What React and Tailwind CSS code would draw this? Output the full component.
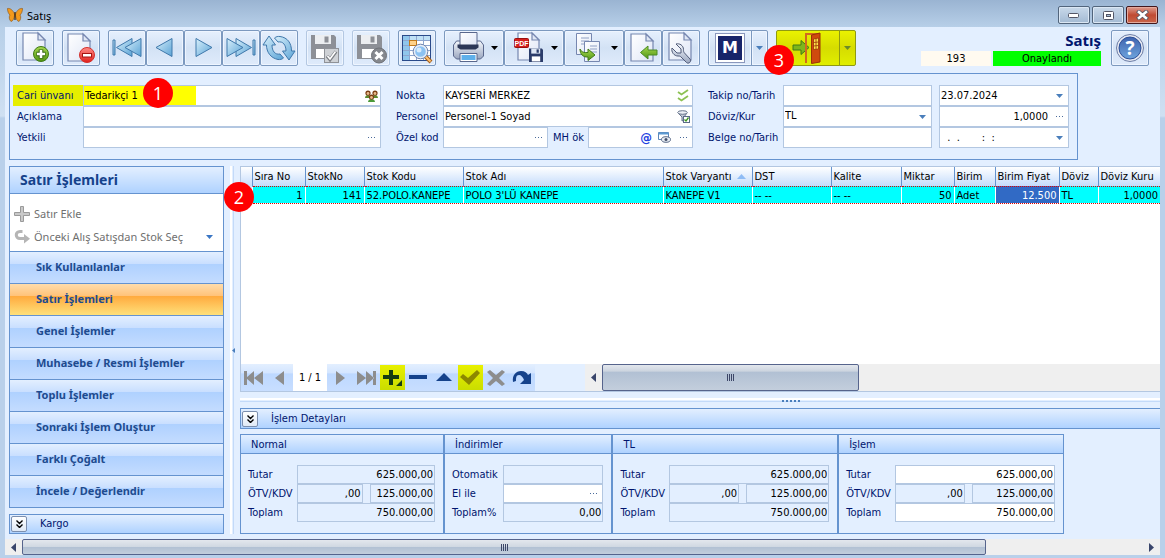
import React, { useState } from 'react';
import clsx from 'clsx';

const NAV_GROUPS = [
  'Sık Kullanılanlar',
  'Satır İşlemleri',
  'Genel İşlemler',
  'Muhasebe / Resmi İşlemler',
  'Toplu İşlemler',
  'Sonraki İşlem Oluştur',
  'Farklı Çoğalt',
  'İncele / Değerlendir',
];

const COLUMNS = [
  { title: 'Sıra No', value: '1', width: 'w-[53px]', right: true },
  { title: 'StokNo', value: '141', width: 'w-[59px]', right: true },
  { title: 'Stok Kodu', value: '52.POLO.KANEPE', width: 'w-[99px]' },
  { title: 'Stok Adı', value: "POLO 3'LÜ KANEPE", width: 'w-[200px]' },
  { title: 'Stok Varyantı', value: 'KANEPE V1', width: 'w-[89px]', sorted: true },
  { title: 'DST', value: '-- --', width: 'w-[79px]' },
  { title: 'Kalite', value: '-- --', width: 'w-[70px]' },
  { title: 'Miktar', value: '50', width: 'w-[53px]', right: true },
  { title: 'Birim', value: 'Adet', width: 'w-[41px]' },
  { title: 'Birim Fiyat', value: '12.500', width: 'w-[64px]', right: true, selected: true },
  { title: 'Döviz', value: 'TL', width: 'w-[39px]' },
  { title: 'Döviz Kuru', value: '1,0000', width: 'w-auto', right: true },
];

/* ---------- small pieces ---------- */

const Caret = ({ className = 'fill-[#4a7ebb]' }) => (
  <svg width="7" height="4" viewBox="0 0 7 4" className={clsx('shrink-0', className)} aria-hidden="true">
    <path d="M0 0h7L3.500 4z" />
  </svg>
);

const StepBadge = ({ children, className }) => (
  <span
    className={clsx(
      "absolute z-10 flex h-[30px] w-[30px] items-center justify-center rounded-full bg-[#ff0000] font-['Open_Sans',sans-serif] text-lg text-white",
      className
    )}
  >
    {children}
  </span>
);

const toolButton =
  'flex h-9 items-center justify-center rounded-[2px] border border-[#7c99bf] bg-linear-to-b from-[#e6f0fd] via-[#d3e2f5] to-[#dfebfb] shadow-[inset_0_0_0_1px_#eef5ff]';

const ToolButton = ({ label, wide, disabled, caret, children }) => (
  <button
    type="button"
    aria-label={label}
    disabled={disabled}
    className={clsx(toolButton, wide ? 'w-[60px]' : 'w-[38px]', disabled && 'border-[#b4c8e2]')}
  >
    {children}
    {caret && <Caret className="mr-1 fill-black" />}
  </button>
);

const Page = ({ x = 6, y = 2, w = 22, h = 27 }) => (
  <g stroke="#7687b0" strokeWidth="1.200">
    <path d={`M${x} ${y}h${w - 7}l7 7v${h - 7}h${-w}z`} fill="url(#paper)" />
    <path d={`M${x + w - 7} ${y}v7h7z`} fill="#dfe7f5" />
  </g>
);

const Icon = ({ w = 36, children }) => (
  <svg width={w} height="34" viewBox={`0 0 ${w} 34`} fill="none" className="shrink-0" aria-hidden="true">
    {children}
  </svg>
);

const Floppy = ({ x, y, s = 1, body = '#8d9097', label = '#eceef1' }) => (
  <g transform={`translate(${x} ${y}) scale(${s})`}>
    <path d="M0 1h23l2 2v22H0z" fill={body} />
    <path d="M4 1h16v9H4z" fill={label} />
    <path d="M13.500 2.500h4v6h-4z" fill={body} />
    <path d="M5 15h15v9H5z" fill="#fff" />
  </g>
);

const SvgDefs = () => (
  <svg width="0" height="0" className="absolute" aria-hidden="true">
    <defs>
      <linearGradient id="paper" x1="0" y1="0" x2="1" y2="1">
        <stop offset="0" stopColor="#ffffff" />
        <stop offset="1" stopColor="#dfe6f6" />
      </linearGradient>
      <linearGradient id="blue" x1="0" y1="0" x2="1" y2="1">
        <stop offset="0" stopColor="#d9f0fb" />
        <stop offset="1" stopColor="#5aa3d6" />
      </linearGradient>
      <linearGradient id="green" x1="0" y1="0" x2="0" y2="1">
        <stop offset="0" stopColor="#a7d94f" />
        <stop offset="1" stopColor="#4f9412" />
      </linearGradient>
      <linearGradient id="red" x1="0" y1="0" x2="0" y2="1">
        <stop offset="0" stopColor="#ff8b86" />
        <stop offset="1" stopColor="#e0201c" />
      </linearGradient>
      <linearGradient id="metal" x1="0" y1="0" x2="0" y2="1">
        <stop offset="0" stopColor="#f4f7fc" />
        <stop offset="1" stopColor="#9aa6bf" />
      </linearGradient>
      <linearGradient id="help" x1="0" y1="0" x2="0" y2="1">
        <stop offset="0" stopColor="#3d62ad" />
        <stop offset="1" stopColor="#6fa5dd" />
      </linearGradient>
    </defs>
  </svg>
);

/* ---------- title bar ---------- */

const TitleBar = () => (
  <header className="flex h-[27px] items-start pr-[7px] pl-[7px]">
    <svg width="16" height="16" viewBox="0 0 16 16" className="mt-[7px]" aria-hidden="true">
      <path d="M7.500 7C6 3 3 1 .5 1.500c0 3 1 5 2.500 6.500C1.500 10 2.500 13 4 14.500c2-.5 3.200-3 3.500-6z" fill="#f39a1d" stroke="#8a4d08" strokeWidth=".6" />
      <path d="M8.500 7C10 3 13 1 15.500 1.500c0 3-1 5-2.500 6.500 1.500 2 .5 5-1 6.500-2-.5-3.200-3-3.500-6z" fill="#f39a1d" stroke="#8a4d08" strokeWidth=".6" />
      <path d="M8 5v8" stroke="#3a2105" strokeWidth="1.200" />
    </svg>
    <h1 className="mt-2 ml-1 font-['Noto_Sans',sans-serif] text-[11px] leading-4 text-black">Satış</h1>
    <div className="mt-[6px] ml-auto flex gap-0.5">
      <button type="button" aria-label="Simge durumuna küçült" className="flex h-[18px] w-8 items-center justify-center rounded-[2px] border border-[#52657c] bg-linear-to-b from-[#c9d9ea] to-[#a3bad3] shadow-[inset_0_0_0_1px_#dbe7f4]">
        <svg width="12" height="5" viewBox="0 0 12 5"><rect x=".5" y=".5" width="10" height="4" rx="1" fill="#fff" stroke="#535666" /></svg>
      </button>
      <button type="button" aria-label="Önceki boyut" className="flex h-[18px] w-8 items-center justify-center rounded-[2px] border border-[#52657c] bg-linear-to-b from-[#c9d9ea] to-[#a3bad3] shadow-[inset_0_0_0_1px_#dbe7f4]">
        <svg width="11" height="9" viewBox="0 0 11 9"><rect x=".5" y=".5" width="10" height="8" rx="1" fill="#fff" stroke="#535666" /><rect x="3.500" y="3.500" width="4" height="2" fill="#a9bfd8" stroke="#535666" /></svg>
      </button>
      <button type="button" aria-label="Kapat" className="flex h-[18px] w-8 items-center justify-center rounded-[2px] border border-[#43171c] bg-linear-to-b from-[#dd9c8f] via-[#c04a33] to-[#c9654a] shadow-[inset_0_0_0_1px_#e5aa9c]">
        <svg width="13" height="10" viewBox="0 0 13 10"><path d="M3 2l7 6M10 2L3 8" stroke="#535666" strokeWidth="4.200" strokeLinecap="square" /><path d="M3 2l7 6M10 2L3 8" stroke="#fff" strokeWidth="2.600" strokeLinecap="square" /></svg>
      </button>
    </div>
  </header>
);

/* ---------- toolbar ---------- */

const triangle = { fill: 'url(#blue)', stroke: '#3f78ab', strokeWidth: 1, strokeLinejoin: 'round' };

const Toolbar = () => (
  <div className="flex items-start pt-[3px] pr-[11px] pb-[7px] pl-[11px]">
    <div className="flex gap-2">
      <ToolButton label="Yeni">
        <Icon>
          <Page />
          <circle cx="24" cy="23" r="7.500" fill="url(#green)" stroke="#3f7a16" />
          <path d="M24 18.500v9M19.500 23h9" stroke="#2f6110" strokeWidth="4.600" />
          <path d="M24 19v8M20 23h8" stroke="#fff" strokeWidth="2.600" />
        </Icon>
      </ToolButton>
      <ToolButton label="Sil">
        <Icon>
          <Page x={5} y={3} />
          <circle cx="24" cy="24" r="7.500" fill="url(#red)" stroke="#d3302c" />
          <rect x="19.500" y="22.500" width="9" height="3.500" fill="#fff" stroke="#a61512" />
        </Icon>
      </ToolButton>
      <div className="flex">
        <ToolButton label="İlk kayıt">
          <Icon>
            <g {...triangle}>
              <path d="M4 9h2v15H4z" />
              <path d="M7.500 16.500L23 7.500v18z" />
              <path d="M16 16.500l16-9v18z" />
            </g>
          </Icon>
        </ToolButton>
        <ToolButton label="Önceki kayıt">
          <Icon><path d="M9 16.500l16-9v18z" {...triangle} /></Icon>
        </ToolButton>
        <ToolButton label="Sonraki kayıt">
          <Icon><path d="M27 16.500l-16-9v18z" {...triangle} /></Icon>
        </ToolButton>
        <ToolButton label="Son kayıt">
          <Icon>
            <g {...triangle}>
              <path d="M30 9h2v15h-2z" />
              <path d="M28.500 16.500L13 7.500v18z" />
              <path d="M20 16.500l-16-9v18z" />
            </g>
          </Icon>
        </ToolButton>
        <ToolButton label="Yenile">
          <Icon>
            <g fill="url(#blue)" stroke="#3f78ab" strokeLinejoin="round">
              <path d="M8 5L2 14h3.500c0 7 4 13 11.500 14.500 2 .3 4-.2 5.500-1.500l-3.500-4c-5 1-8-3-8-9h3.500z" />
              <path d="M28 29l6-9h-3.500C30.500 12 26.500 6.500 19 5.500c-2-.3-4 .2-5.500 1.500l3.500 4c5-1 8 3 8 9h-3.500z" />
            </g>
          </Icon>
        </ToolButton>
      </div>
      <ToolButton label="Kaydet" disabled>
        <Icon>
          <Floppy x={4} y={3} />
          <rect x="17.500" y="17.500" width="14" height="14" fill="#cfd2d6" stroke="#8f9298" />
          <path d="M20 25l3 3.500 6-8" stroke="#7b7e84" strokeWidth="3.400" />
          <path d="M20.500 25l2.500 3 5.500-7.500" stroke="#fff" strokeWidth="1.600" />
        </Icon>
      </ToolButton>
      <ToolButton label="Vazgeç" disabled>
        <Icon>
          <Floppy x={4} y={3} />
          <circle cx="26" cy="24.500" r="7.500" fill="#85888e" stroke="#6e7177" />
          <path d="M22.500 21l7 7M29.500 21l-7 7" stroke="#fff" strokeWidth="3" />
        </Icon>
      </ToolButton>
      <ToolButton label="Listede ara">
        <Icon>
          <rect x="3.500" y="4.500" width="28" height="25" fill="#fff" stroke="#2a4a8a" />
          <path d="M4 5h6v24H4z" fill="#8fc6ec" />
          <path d="M10 5h21v4H10z" fill="#bfe0f5" />
          <path d="M10.500 5v24M17.500 5v24M24.500 5v24M4 9.500h27M4 14.500h27M4 19.500h27M4 24.500h27" stroke="#8ea6cf" />
          <rect x="10.500" y="9.500" width="7" height="5" fill="#ffd28a" stroke="#c07a1c" />
          <path d="M26 25l6 6" stroke="#a5601c" strokeWidth="4" />
          <path d="M26.500 25.500l5 5" stroke="#ffc070" strokeWidth="2" />
          <circle cx="21.500" cy="20.500" r="6.300" fill="#8cc2f2" stroke="#e8eef8" strokeWidth="2" />
          <circle cx="21.500" cy="20.500" r="7.300" stroke="#7186ae" />
          <circle cx="20" cy="19" r="2.500" fill="#d8ecfc" />
        </Icon>
      </ToolButton>
      <div className="flex">
        <ToolButton label="Yazdır" wide caret>
          <Icon w={44}>
            <path d="M6.500 14l3-4h24l3 4v11l-3 3h-24l-3-3z" fill="url(#metal)" stroke="#59678c" />
            <path d="M13 1.500h17v14H13z" fill="url(#paper)" stroke="#59678c" />
            <path d="M10.500 13.500h21v3l-3 2h-15l-3-2z" fill="#2c3757" />
            <path d="M13 22.500h17v8H13z" fill="#fff" stroke="#59678c" />
            <path d="M14.500 24h14v5h-14z" fill="#5fb0ea" />
          </Icon>
        </ToolButton>
        <ToolButton label="PDF kaydet" wide caret>
          <Icon w={44}>
            <Page x={11} y={2} w={21} />
            <rect x="7.500" y="7.500" width="14" height="9" rx="1" fill="#d5201d" stroke="#9a100e" />
            <text x="14.500" y="14.500" textAnchor="middle" fontSize="7" fontWeight="700" fill="#fff" fontFamily="Liberation Sans">PDF</text>
            <Floppy x={22} y={17} s={0.56} body="#2b3c6a" label="#dfe8f5" />
          </Icon>
        </ToolButton>
        <ToolButton label="Aktar" wide caret>
          <Icon w={44}>
            <path d="M9.500 2.500h15v21h-15z" fill="url(#paper)" stroke="#7687b0" />
            <path d="M14 7h8M14 10h8M14 13h8" stroke="#8fa0c4" />
            <path d="M17.500 10.500h15v20h-15z" fill="url(#paper)" stroke="#7687b0" />
            <path d="M23 15h7M23 18h7M23 21h7" stroke="#8fa0c4" />
            <path d="M13 18c1 3 4 4 8 3.500V18l7 6-7 5.500V26c-5 .5-8-3-8-8z" fill="url(#green)" stroke="#3f7a16" />
          </Icon>
        </ToolButton>
        <ToolButton label="İçeri al">
          <Icon>
            <Page y={3} />
            <path d="M15.500 21.500l7.500-6.500v4h9v5h-9v4z" fill="url(#green)" stroke="#4a8a26" />
          </Icon>
        </ToolButton>
        <ToolButton label="Araçlar">
          <Icon>
            <Page y={2} />
            <path d="M13 13l5 5v4h-4l-5-5c-1 4 2 8 6 8 1.500 0 2 0 3 1l5.500 5.500c2 2 5.500-1 3.500-3.500L21.500 22c-1-1-1-2-1-3.500 0-4-4-6.500-7.500-5.500z" fill="url(#metal)" stroke="#4f5a78" />
          </Icon>
        </ToolButton>
      </div>
      <div className="flex">
        <button type="button" aria-label="Mikro" className={clsx(toolButton, 'w-11 rounded-r-none')}>
          <span className="flex h-[30px] w-[30px] items-center justify-center border border-[#8a97bd] bg-white">
            <span className="flex h-6 w-6 items-center justify-center bg-[#17246a] font-['DejaVu_Sans',sans-serif] text-base leading-none font-bold text-white">M</span>
          </span>
        </button>
        <button type="button" aria-label="Mikro seçenekleri" className={clsx(toolButton, '-ml-px w-[17px] rounded-l-none')}>
          <Caret />
        </button>
      </div>
      <div className="relative flex">
        <button type="button" aria-label="Çıkış" className="flex h-9 w-16 items-center justify-center rounded-l-[2px] border border-[#8f9a12] bg-linear-to-b from-[#eaf200] via-[#d6dc00] to-[#e0ee00]">
          <Icon w={60}>
            <path d="M15 14h8V9.500l8 7-8 7V19h-8z" fill="#7db61c" stroke="#3f7a16" />
            <path d="M28 32V3h13" stroke="#d2691e" strokeWidth="2" />
            <path d="M33.500 4L42 2v29l-8.500 1.500z" fill="#cf4a0e" stroke="#9a3206" />
            <path d="M35.500 8l5-1v11l-5 .5z" fill="#ffe24a" stroke="#9a3206" strokeWidth=".8" />
            <path d="M38 7.500v11M35.500 11.500l5-.5M35.500 15l5-.5" stroke="#9a3206" strokeWidth=".8" />
          </Icon>
        </button>
        <button type="button" aria-label="Çıkış seçenekleri" className="-ml-px flex h-9 w-[17px] items-center justify-center rounded-r-[2px] border border-[#8f9a12] bg-linear-to-b from-[#eaf200] via-[#d6dc00] to-[#e0ee00]">
          <Caret className="fill-[#6c8a2a]" />
        </button>
        <StepBadge className="top-[15px] -left-3">3</StepBadge>
      </div>
    </div>

    <div className="ml-auto flex flex-col items-end">
      <strong className="h-[21px] font-['Noto_Sans',sans-serif] text-[15px] leading-5 text-[#00156e]">Satış</strong>
      <div className="flex gap-0.5 text-center text-[11px] leading-4 text-black">
        <span className="h-[15px] w-[70px] bg-[#fffaf0]">193</span>
        <span className="h-[15px] w-[108px] bg-[#00ff00]">Onaylandı</span>
      </div>
    </div>
    <div className="ml-2.5">
      <ToolButton label="Yardım">
        <Icon>
          <circle cx="18" cy="17" r="13.500" fill="#e6e9f2" stroke="#6d7ea6" />
          <circle cx="18" cy="17" r="11" fill="url(#help)" stroke="#2d4f97" />
          <text x="18" y="24" textAnchor="middle" fontSize="19" fontWeight="700" fill="#fff" fontFamily="Open Sans">?</text>
        </Icon>
      </ToolButton>
    </div>
  </div>
);

/* ---------- document form ---------- */

const Dots = () => (
  <button type="button" aria-label="Seç" className="mr-[3px] flex h-4 w-3 shrink-0 items-center justify-center gap-0.5">
    <i className="h-px w-px bg-[#4a6a9a]" />
    <i className="h-px w-px bg-[#4a6a9a]" />
    <i className="h-px w-px bg-[#4a6a9a]" />
  </button>
);

const Drop = () => (
  <button type="button" aria-label="Listeyi aç" className="mr-[5px] flex h-4 items-center">
    <Caret />
  </button>
);

const TextBox = ({ id, label, value = '', right, highlight, className, children }) => {
  const [text, setText] = useState(value);
  return (
    <div className={clsx('relative flex h-[21px] min-w-0 items-center border border-[#b3c7e1] bg-white', className)}>
      <input
        id={id}
        aria-label={label}
        type="text"
        value={text}
        onChange={(e) => setText(e.target.value)}
        className={clsx(
          'h-full w-full min-w-0 px-px text-black outline-none',
          right && 'text-right',
          highlight && 'bg-linear-to-r from-[#ffff00] from-[112px] to-transparent to-[112px]'
        )}
      />
      {children}
    </div>
  );
};

const FieldLabel = ({ htmlFor, className, children }) => (
  <label htmlFor={htmlFor} className={clsx('h-[21px] leading-[22px] whitespace-nowrap text-[#00156e]', className)}>
    {children}
  </label>
);

const DocumentForm = () => (
  <form className="mr-[82px] ml-1 flex border border-[#6593cf] pt-[11px] pr-2 pb-[11px] pl-[3px]">
    <div className="grid flex-[368] grid-cols-[70px_1fr]">
      <FieldLabel htmlFor="cari" className="bg-[#e6ee00] pl-1 text-[#2b3a00]">Cari ünvanı</FieldLabel>
      <TextBox id="cari" value="Tedarikçi 1" highlight>
        <svg width="13" height="12" viewBox="0 0 13 12" className="mr-0.5 shrink-0" aria-hidden="true">
          <path d="M0 8c0-4 6-4 6 0zM7 8c0-4 6-4 6 0z" fill="#5c8a2e" />
          <circle cx="3" cy="3" r="2.600" fill="#7a3d12" />
          <circle cx="10" cy="3" r="2.600" fill="#7a3d12" />
          <circle cx="3" cy="3.500" r="1.400" fill="#e9b98a" />
          <circle cx="10" cy="3.500" r="1.400" fill="#e9b98a" />
          <path d="M3 12c0-4 7-4 7 0z" fill="#4c9a3a" />
          <circle cx="6.500" cy="7" r="2.600" fill="#7a3d12" />
          <circle cx="6.500" cy="7.500" r="1.400" fill="#e9b98a" />
        </svg>
        <StepBadge className="-top-2 left-[59px]">1</StepBadge>
      </TextBox>
      <FieldLabel htmlFor="aciklama" className="pl-1">Açıklama</FieldLabel>
      <TextBox id="aciklama" />
      <FieldLabel htmlFor="yetkili" className="pl-1">Yetkili</FieldLabel>
      <TextBox id="yetkili"><Dots /></TextBox>
    </div>

    <div className="ml-[15px] grid flex-[297] grid-cols-[47px_1fr]">
      <FieldLabel htmlFor="nokta">Nokta</FieldLabel>
      <TextBox id="nokta" value="KAYSERİ MERKEZ">
        <svg width="12" height="13" viewBox="0 0 12 13" fill="none" className="mr-[3px] shrink-0" aria-hidden="true">
          <path d="M1 3l3.500 2.500L11 1M1 9l3.500 2.500L11 7" stroke="#8cc152" strokeWidth="1.800" />
        </svg>
      </TextBox>
      <FieldLabel htmlFor="personel">Personel</FieldLabel>
      <TextBox id="personel" value="Personel-1 Soyad">
        <svg width="13" height="13" viewBox="0 0 13 13" fill="none" className="mr-0.5 shrink-0" aria-hidden="true">
          <path d="M1 3l4 4v4l2-1V7l3-4" fill="#c3cad6" stroke="#66738c" />
          <ellipse cx="5.500" cy="2.500" rx="4.800" ry="1.800" fill="#eef1f6" stroke="#66738c" />
          <rect x="6.500" y="6.500" width="6" height="6" fill="#fff" stroke="#5b6b88" />
          <path d="M7.500 9.500l1.500 1.500 2.500-3.500" stroke="#3f9a20" strokeWidth="1.300" />
        </svg>
      </TextBox>
      <FieldLabel htmlFor="ozel">Özel kod</FieldLabel>
      <div className="flex">
        <TextBox id="ozel" className="flex-1"><Dots /></TextBox>
        <FieldLabel htmlFor="mh" className="w-10 pl-[5px]">MH ök</FieldLabel>
        <TextBox id="mh" className="flex-1">
          <button type="button" aria-label="E-posta" className="mr-1.5 text-[13px] leading-none font-bold text-[#1d3fe0]">@</button>
          <svg width="13" height="11" viewBox="0 0 13 11" fill="none" className="mr-1.5 shrink-0" aria-hidden="true">
            <path d="M.5.5h10v7H.5z" fill="#fff" stroke="#5c86b8" />
            <path d="M.5.5h10v2H.5z" fill="#5c9ad2" />
            <ellipse cx="8" cy="7.500" rx="4.500" ry="2.800" fill="#e8edf4" stroke="#5b6b88" />
            <circle cx="8" cy="7.500" r="1.500" fill="#43506a" />
          </svg>
          <Dots />
        </TextBox>
      </div>
    </div>

    <div className="ml-[15px] grid flex-[361] grid-cols-[68px_149fr_130fr] gap-x-[7px]">
      <div className="flex flex-col">
        <FieldLabel htmlFor="takip">Takip no/Tarih</FieldLabel>
        <FieldLabel htmlFor="doviz">Döviz/Kur</FieldLabel>
        <FieldLabel htmlFor="belge">Belge no/Tarih</FieldLabel>
      </div>
      <div className="flex flex-col">
        <TextBox id="takip" />
        <div className="relative flex h-[21px] items-center border border-[#b3c7e1] bg-white">
          <select id="doviz" className="h-full w-full appearance-none px-px text-black outline-none" defaultValue="TL">
            <option>TL</option>
            <option>USD</option>
            <option>EUR</option>
          </select>
          <span className="pointer-events-none absolute right-[5px]"><Caret /></span>
        </div>
        <TextBox id="belge" />
      </div>
      <div className="flex flex-col">
        <TextBox label="Takip tarihi" value="23.07.2024"><Drop /></TextBox>
        <TextBox label="Kur" value="1,0000" right>
          <span className="w-1 shrink-0" />
          <Dots />
        </TextBox>
        <TextBox label="Belge tarihi" value={'\u00a0 .\u00a0 .\u00a0 \u00a0 \u00a0 \u00a0:\u00a0 :'}><Drop /></TextBox>
      </div>
    </div>
  </form>
);

/* ---------- left menu ---------- */

const ExpandMark = ({ label }) => (
  <button type="button" aria-label={label} className="flex h-4 w-4 items-center justify-center rounded-[2px] border border-[#7c8fae] bg-linear-to-b from-white to-[#dfe9f6]">
    <svg width="7" height="8" viewBox="0 0 7 8" fill="none" stroke="#000" strokeWidth="1.400">
      <path d="M.5.500l3 3 3-3M.5 4.500l3 3 3-3" />
    </svg>
  </button>
);

const Sidebar = () => {
  const [active, setActive] = useState('Satır İşlemleri');

  return (
    <aside className="flex w-[215px] shrink-0 flex-col justify-between">
      <nav className="border border-[#6593cf] bg-white font-['Noto_Sans',sans-serif]">
        <h2 className="h-[27px] border-b border-[#6593cf] bg-linear-to-b from-[#e3efff] to-[#afd2ff] pl-2.5 text-sm leading-[26px] font-bold text-[#15428b]">
          Satır İşlemleri
        </h2>
        <div className="flex h-[57px] flex-col gap-[7px] pt-3 text-[11px] text-[#6f6f6f]">
          <button type="button" className="flex h-4 items-center pl-1">
            <svg width="16" height="16" viewBox="0 0 16 16" aria-hidden="true">
              <path d="M6.500.5h3v6h6v3h-6v6h-3v-6h-6v-3h6z" fill="#c9c9c9" stroke="#9a9a9a" />
            </svg>
            <span className="ml-1">Satır Ekle</span>
          </button>
          <button type="button" className="flex h-4 items-center pr-2.5 pl-1">
            <svg width="16" height="16" viewBox="0 0 16 16" fill="none" aria-hidden="true">
              <path d="M8.500 2.500H6c-5 0-5 7 0 7h5" stroke="#b5b5b5" strokeWidth="3" />
              <path d="M10 5l6 4.700L10 14.500z" fill="#b5b5b5" />
            </svg>
            <span className="ml-1">Önceki Alış Satışdan Stok Seç</span>
            <Caret className="ml-auto fill-[#3a76c4]" />
          </button>
        </div>
        {NAV_GROUPS.map((group) => (
          <button
            key={group}
            type="button"
            onClick={() => setActive(group)}
            className={clsx(
              'block h-8 w-full border-t border-[#6593cf] pl-[26px] text-left text-[11px] font-bold text-[#1e4b8f]',
              group === active
                ? 'bg-[linear-gradient(to_bottom,#ffdcab_0%,#ffc37a_38%,#ffab3f_40%,#fee07a_100%)]'
                : 'bg-[linear-gradient(to_bottom,#e3efff_0%,#c9dfff_38%,#afd1ff_40%,#c4dcff_100%)]'
            )}
          >
            {group}
          </button>
        ))}
      </nav>
      <div className="flex h-5 items-center border border-[#6593cf] bg-linear-to-b from-[#e3efff] to-[#afd2ff] pl-px text-[11px] text-[#00156e]">
        <ExpandMark label="Kargo bölümünü aç" />
        <span className="ml-[13px]">Kargo</span>
      </div>
    </aside>
  );
};

/* ---------- line items ---------- */

const navButton =
  'flex h-[27px] w-[26px] items-center justify-center bg-[linear-gradient(to_bottom,#e3efff_0%,#d3e5ff_34%,#bdd8ff_36%,#c8deff_100%)]';

const NavButton = ({ label, marked, children }) => (
  <button type="button" aria-label={label} className={navButton}>
    <span className={clsx('flex h-[25px] w-[25px] items-center justify-center', marked && 'bg-linear-to-b from-[#e8f000] to-[#cadd00]')}>
      <svg width="20" height="16" viewBox="0 0 20 16" fill="#15428b" aria-hidden="true">
        {children}
      </svg>
    </span>
  </button>
);

const Grip = () => (
  <span className="flex gap-px">
    {[0, 1, 2, 3].map((i) => (
      <i key={i} className="h-[7px] w-px bg-[#3c4668]" />
    ))}
  </span>
);

const ScrollArrow = ({ label, right }) => (
  <button type="button" aria-label={label} className="flex h-full w-[17px] items-center justify-center">
    <svg width="5" height="9" viewBox="0 0 5 9" fill="#39456b">
      <path d={right ? 'M0 0l5 4.500L0 9z' : 'M5 0L0 4.500 5 9z'} />
    </svg>
  </button>
);

const LineItems = () => (
  <section className="flex min-h-[226px] flex-1 flex-col overflow-hidden border border-r-0 border-[#b3c7e1] bg-white">
    <table className="w-full table-fixed border-collapse text-left whitespace-nowrap text-black">
      <thead>
        <tr className="h-[19px] bg-linear-to-b from-white to-[#c5dcfb]">
          <th aria-label="İşaret" className="w-[11px] p-0" />
          {COLUMNS.map((col) => (
            <th key={col.title} scope="col" className={clsx('border-l border-[#6593cf] p-0 pt-px pl-0.5 font-normal', col.width)}>
              <span className="flex items-center justify-between pr-1.5">
                {col.title}
                {col.sorted && (
                  <svg width="9" height="5" viewBox="0 0 9 5" className="shrink-0 fill-[#8fbcf5]" aria-hidden="true">
                    <path d="M4.500 0L9 5H0z" />
                  </svg>
                )}
              </span>
            </th>
          ))}
        </tr>
      </thead>
      <tbody>
        <tr className="h-[17px]">
          <td className="bg-[#d6e6fb] p-0" />
          {COLUMNS.map((col) => (
            <td
              key={col.title}
              className={clsx(
                'border-y border-l border-y-[#e00000] border-l-white p-0 pt-0.5 leading-[14px] [border-bottom-style:dotted] [border-top-style:dotted]',
                col.right ? 'pr-0.5 text-right' : 'pl-0.5',
                col.selected ? 'bg-[#316ac5] text-white' : 'bg-[#00ffff]'
              )}
            >
              {col.value}
            </td>
          ))}
        </tr>
      </tbody>
    </table>

    <div className="mt-auto flex h-[27px] bg-[#e3efff]">
      <div className="flex shrink-0">
        <NavButton label="İlk satır"><path d="M0 1h3v14H0zM2 8l8-7v14zM10 8l9-7v14z" fill="#8d8d8d" /></NavButton>
        <NavButton label="Önceki satır"><path d="M5 8l9-7v14z" fill="#8d8d8d" /></NavButton>
        <span className="w-[34px] bg-white text-center leading-[28px] text-black">1 / 1</span>
        <NavButton label="Sonraki satır"><path d="M15 8L6 1v14z" fill="#8d8d8d" /></NavButton>
        <NavButton label="Son satır"><path d="M17 1h3v14h-3zM18 8l-8-7v14zM10 8L1 1v14z" fill="#8d8d8d" /></NavButton>
        <NavButton label="Satır ekle" marked><path d="M7 0h4v5h6v4h-6v6H7V9H1V5h6zM20 10v6h-6z" fill="#163c12" /></NavButton>
        <NavButton label="Satır sil"><path d="M1 5h18v4H1z" /></NavButton>
        <NavButton label="Düzenle"><path d="M10 3l8 8H2z" /></NavButton>
        <NavButton label="Onayla" marked><path d="M0 7l3-3 5 4 9-8 3 3L9 15z" fill="#8c8800" /></NavButton>
        <NavButton label="İptal"><path d="M1 2l3-2 6 5 6-5 3 2-6 6 6 6-3 2-6-5-6 5-3-2 6-6z" fill="#8d8d8d" /></NavButton>
        <NavButton label="Yenile"><path d="M1 12C0 5 4 1 9 1c4 0 6 2 7 4l3-2v11H8l4-4c-1-3-3-5-5-5-3 0-3 3-3 6z" /></NavButton>
      </div>
      <div className="ml-[50px] flex flex-1 bg-[#efefef]">
        <ScrollArrow label="Sola kaydır" />
        <div className="flex-1">
          <div className="flex h-[27px] w-[46%] items-center justify-center rounded-[2px] border border-[#56648c] bg-[linear-gradient(to_bottom,#e3e7ed_0%,#ccd4df_25%,#b1c0d3_28%,#c3cedc_100%)]">
            <Grip />
          </div>
        </div>
      </div>
    </div>
  </section>
);

/* ---------- totals ---------- */

const GroupTitle = ({ id, children }) => (
  <h3 id={id} className="h-[19px] border-b border-[#6593cf] bg-linear-to-b from-[#e3efff] to-[#afd2ff] pl-2.5 leading-[19px] text-[#00156e]">
    {children}
  </h3>
);

const AmountBox = ({ id, label, value = '', editable, className, children }) => (
  <div className={clsx('flex h-[19px] min-w-0 items-center border border-[#b3c7e1]', editable && 'bg-white', className)}>
    <input
      id={id}
      aria-label={label}
      type="text"
      readOnly={!editable}
      defaultValue={value}
      className="h-full w-full min-w-0 px-px text-right text-black outline-none"
    />
    {children}
  </div>
);

const Totals = ({ title, id, editable, className = 'flex-[226]', taxWidth = 'flex-[1.2]' }) => (
  <div role="group" aria-labelledby={`${id}-baslik`} className={clsx('min-w-0 border border-[#6593cf]', className)}>
    <GroupTitle id={`${id}-baslik`}>{title}</GroupTitle>
    <div className="grid grid-cols-[49px_1fr] pt-[11px] pr-2 pb-[11px] pl-[7px]">
      <label htmlFor={`${id}-tutar`} className="leading-[19px] text-[#00156e]">Tutar</label>
      <AmountBox id={`${id}-tutar`} value="625.000,00" editable={editable} />
      <label htmlFor={`${id}-otv`} className="leading-[19px] text-[#00156e]">ÖTV/KDV</label>
      <div className="flex gap-[7px]">
        <AmountBox id={`${id}-otv`} value=",00" className="flex-1" />
        <AmountBox label={`${title} KDV`} value="125.000,00" className={taxWidth} />
      </div>
      <label htmlFor={`${id}-toplam`} className="leading-[19px] text-[#00156e]">Toplam</label>
      <AmountBox id={`${id}-toplam`} value="750.000,00" editable={editable} />
    </div>
  </div>
);

const Discounts = () => (
  <div role="group" aria-labelledby="ind-baslik" className="min-w-0 flex-[168] border border-[#6593cf]">
    <GroupTitle id="ind-baslik">İndirimler</GroupTitle>
    <div className="grid grid-cols-[51px_1fr] pt-[11px] pr-2 pb-[11px] pl-[7px]">
      <label htmlFor="ind-oto" className="leading-[19px] text-[#00156e]">Otomatik</label>
      <AmountBox id="ind-oto" />
      <label htmlFor="ind-el" className="leading-[19px] text-[#00156e]">El ile</label>
      <AmountBox id="ind-el" editable><Dots /></AmountBox>
      <label htmlFor="ind-toplam" className="leading-[19px] text-[#00156e]">Toplam%</label>
      <AmountBox id="ind-toplam" value="0,00" />
    </div>
  </div>
);

const Details = () => (
  <section>
    <div className="flex h-[21px] items-center border border-r-0 border-[#6593cf] bg-linear-to-b from-[#e3efff] to-[#afd2ff] pl-px text-[#00156e]">
      <ExpandMark label="İşlem detaylarını daralt" />
      <h2 className="ml-[13px] leading-[19px]">İşlem Detayları</h2>
    </div>
    <div className="mt-[5px] mr-24 flex">
      <Totals title="Normal" id="normal" className="flex-[204]" taxWidth="flex-1" />
      <Discounts />
      <Totals title="TL" id="tl" />
      <Totals title="İşlem" id="islem" editable />
    </div>
  </section>
);

const App = () => (
  <div className="flex min-h-screen flex-col bg-[linear-gradient(to_bottom,#9ab4d2_0px,#b7cfe8_27px,#cfe0f2_116px,#b9d0ea_118px)] font-['DejaVu_Sans_Condensed','Noto_Sans',sans-serif] text-[11px]">
    <SvgDefs />
    <TitleBar />
    <main className="mx-[5px] mb-[3px] flex flex-1 flex-col bg-[#e3efff]">
      <Toolbar />
      <DocumentForm />
      <div className="mt-[6px] mb-[5px] ml-1 flex flex-1">
        <Sidebar />
        <div className="mx-1.5 flex w-1 shrink-0 items-center border-r border-l-2 border-r-[#c3daf9] border-l-white">
          <svg width="3" height="5" viewBox="0 0 3 5" fill="#4a7ebb" className="shrink-0"><path d="M3 0L0 2.500 3 5z" /></svg>
        </div>
        <div className="relative flex min-w-0 flex-1 flex-col">
          <StepBadge className="top-4 -left-4">2</StepBadge>
          <LineItems />
          <div className="my-1.5 flex h-1 items-center justify-center border-t-2 border-b border-t-white border-b-[#c3daf9] pl-[182px]">
            <span className="w-[18px] border-t-2 border-dotted border-[#4a7ebb]" />
          </div>
          <Details />
        </div>
      </div>
      <div className="flex h-4 bg-[#efefef]">
        <ScrollArrow label="Sola kaydır" />
        <div className="flex-1">
          <div className="flex h-4 w-[86%] items-center justify-center rounded-[2px] border border-[#56648c] bg-[linear-gradient(to_bottom,#e3e7ed_0%,#d0d8e2_48%,#b1c0d3_50%,#c3cedc_100%)]">
            <Grip />
          </div>
        </div>
        <ScrollArrow label="Sağa kaydır" right />
      </div>
    </main>
  </div>
);

export default App;
